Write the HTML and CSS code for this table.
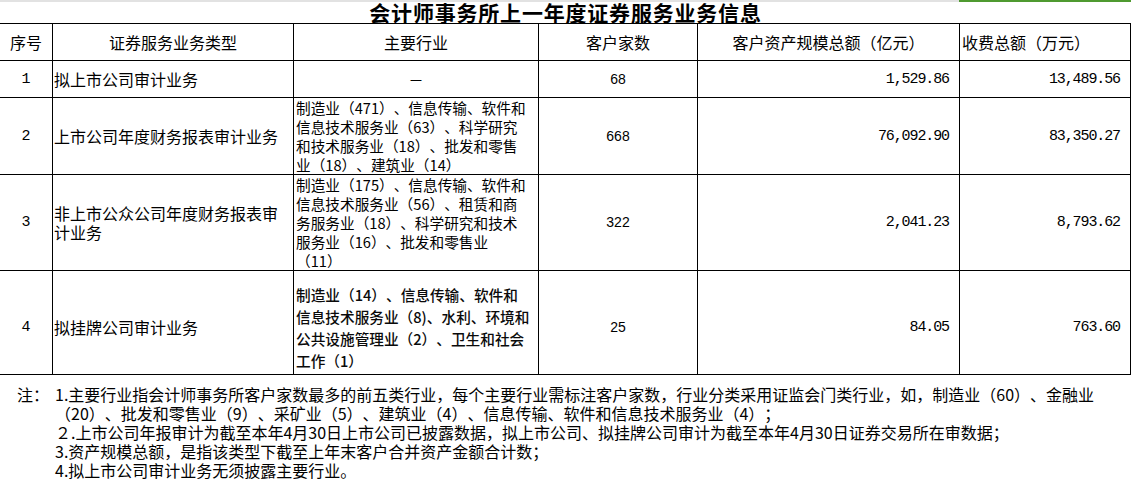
FILE: index.html
```html
<!DOCTYPE html>
<html lang="zh-CN">
<head>
<meta charset="utf-8">
<title>会计师事务所上一年度证券服务业务信息</title>
<link rel="stylesheet" href="styles.css">
</head>
<body>
<div class="topbar"><div class="topbar-gray"></div><div class="topbar-green"></div></div>
<div class="title-row"><div class="title">会计师事务所上一年度证券服务业务信息</div></div>
<table class="sheet">
  <colgroup>
    <col class="c1"><col class="c2"><col class="c3"><col class="c4"><col class="c5"><col class="c6">
  </colgroup>
  <thead>
    <tr class="r-head">
      <th>序号</th>
      <th>证券服务业务类型</th>
      <th>主要行业</th>
      <th>客户家数</th>
      <th>客户资产规模总额（亿元）</th>
      <th class="left">收费总额（万元）</th>
    </tr>
  </thead>
  <tbody>
    <tr class="r1">
      <td class="idx">1</td>
      <td class="type">拟上市公司审计业务</td>
      <td class="dash">－</td>
      <td class="cnt">68</td>
      <td class="amt">1,529.86</td>
      <td class="amt">13,489.56</td>
    </tr>
    <tr class="r2">
      <td class="idx">2</td>
      <td class="type">上市公司年度财务报表审计业务</td>
      <td class="ind">制造业（471）、信息传输、软件和<br>信息技术服务业（63）、科学研究<br>和技术服务业（18）、批发和零售<br>业（18）、建筑业（14）</td>
      <td class="cnt">668</td>
      <td class="amt">76,092.90</td>
      <td class="amt">83,350.27</td>
    </tr>
    <tr class="r3">
      <td class="idx">3</td>
      <td class="type">非上市公众公司年度财务报表审<br>计业务</td>
      <td class="ind">制造业（175）、信息传输、软件和<br>信息技术服务业（56）、租赁和商<br>务服务业（18）、科学研究和技术<br>服务业（16）、批发和零售业<br>（11）</td>
      <td class="cnt">322</td>
      <td class="amt">2,041.23</td>
      <td class="amt">8,793.62</td>
    </tr>
    <tr class="r4">
      <td class="idx">4</td>
      <td class="type">拟挂牌公司审计业务</td>
      <td class="ind ind-alt">制造业（14）、信息传输、软件和<br>信息技术服务业（8)、水利、环境和<br>公共设施管理业（2）、卫生和社会<br>工作（1）</td>
      <td class="cnt">25</td>
      <td class="amt">84.05</td>
      <td class="amt">763.60</td>
    </tr>
  </tbody>
</table>
<div class="notes">
  <div class="note-label">注：</div>
  <div class="note-body">
    <div class="note-line">1.主要行业指会计师事务所客户家数最多的前五类行业，每个主要行业需标注客户家数，行业分类采用证监会门类行业，如，制造业（60）、金融业</div>
    <div class="note-line">（20）、批发和零售业（9）、采矿业（5）、建筑业（4）、信息传输、软件和信息技术服务业（4）；</div>
    <div class="note-line">２.上市公司年报审计为截至本年4月30日上市公司已披露数据，拟上市公司、拟挂牌公司审计为截至本年4月30日证券交易所在审数据；</div>
    <div class="note-line">3.资产规模总额，是指该类型下截至上年末客户合并资产金额合计数；</div>
    <div class="note-line">4.拟上市公司审计业务无须披露主要行业。</div>
  </div>
</div>
</body>
</html>
```
FILE: styles.css
```css
html, body {
  margin: 0;
  padding: 0;
  background: #ffffff;
}
body {
  width: 1131px;
  font-family: "Noto Sans CJK SC", "Liberation Sans", sans-serif;
  font-size: 16px;
  color: #000;
  text-spacing-trim: space-all;
}
.topbar {
  display: flex;
  height: 2px;
}
.topbar-gray {
  flex: 0 0 959px;
  background: #e2e2e2;
}
.topbar-green {
  flex: 1 1 auto;
  background: #4f9a30;
}
.title-row {
  height: 21px;
  width: 1131px;
}
.title {
  text-align: center;
  font-size: 21px;
  font-weight: 700;
  line-height: 21px;
  letter-spacing: 0.8px;
}
.sheet {
  border-collapse: separate;
  border-spacing: 0;
  table-layout: fixed;
  width: 1131px;
  border-top: 1px solid #000;
}
.c1 { width: 53px; }
.c2 { width: 241px; }
.c3 { width: 245px; }
.c4 { width: 159px; }
.c5 { width: 262px; }
.c6 { width: 171px; }
.sheet th,
.sheet td {
  box-sizing: border-box;
  border-right: 1px solid #000;
  border-bottom: 1px solid #000;
  padding: 0;
  vertical-align: middle;
  font-weight: 400;
  line-height: 19px;
  white-space: nowrap;
  overflow: hidden;
}
.sheet th {
  text-align: center;
  font-size: 16px;
  height: 37px;
}
.sheet th.left {
  text-align: left;
  padding-left: 2px;
}
.r1 td { height: 37px; }
.r2 td { height: 76px; }
.r3 td { height: 95px; }
.r4 td { height: 104px; padding-top: 10px; }
.idx {
  text-align: center;
  font-family: "Liberation Mono", monospace;
  font-size: 15px;
}
.type {
  text-align: left;
  padding-left: 1px !important;
  font-size: 16px;
}
.dash {
  text-align: center;
  font-size: 15px;
}
.ind {
  text-align: left;
  padding-left: 2px !important;
  font-size: 14.67px;
  line-height: 19px !important;
}
.ind-alt {
  line-height: 22px !important;
  font-weight: 500 !important;
  color: #0a0a0a;
}
.cnt {
  text-align: center;
  font-family: "Liberation Sans", sans-serif;
  font-size: 14px;
}
.amt {
  text-align: right;
  padding-right: 10px !important;
  font-family: "Liberation Mono", monospace;
  font-size: 15px;
  letter-spacing: -1.1px;
}
.notes {
  display: flex;
  padding-top: 10px;
  line-height: 19px;
  font-size: 16px;
}
.note-label {
  flex: 0 0 55px;
  box-sizing: border-box;
  padding-left: 17px;
}
.note-body {
  flex: 1 1 auto;
  white-space: nowrap;
}
```
